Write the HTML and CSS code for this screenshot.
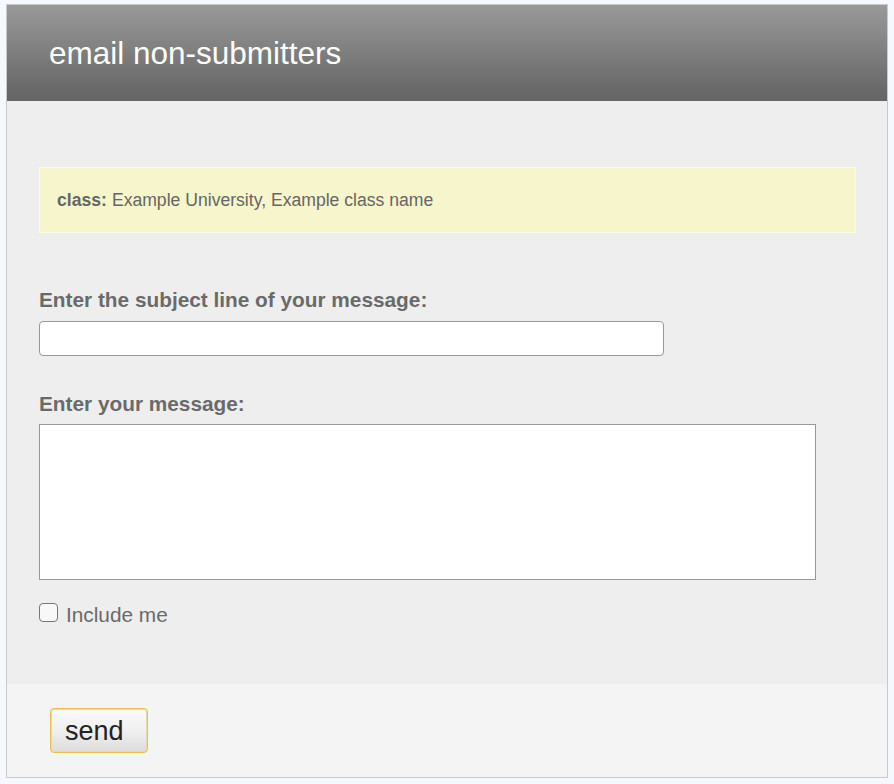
FILE: index.html
```html
<!DOCTYPE html>
<html>
<head>
<meta charset="utf-8">
<title>email non-submitters</title>
<link rel="stylesheet" href="styles.css">
</head>
<body>
<div class="panel">
  <div class="panel-header">
    <h1 class="title">email non-submitters</h1>
  </div>
  <div class="panel-body">
    <div class="notice"><b>class:</b> Example University, Example class name</div>
    <label class="field-label" for="subject">Enter the subject line of your message:</label>
    <input class="subject" id="subject" type="text">
    <label class="field-label second" for="message">Enter your message:</label>
    <textarea class="message" id="message"></textarea>
    <label class="include"><input type="checkbox" class="check"><span>Include me</span></label>
  </div>
  <div class="panel-footer">
    <button class="send" type="button">send</button>
  </div>
</div>
</body>
</html>
```
FILE: styles.css
```css
* { box-sizing: border-box; }
html, body { background: #f5f9fd; }
body {
  margin: 4px 6px;
  font-family: "Liberation Sans", Arial, sans-serif;
  color: #666;
}
.panel {
  width: 882px;
  border: 1px solid #c9c9c9;
  background: #eee;
}
.panel-header {
  height: 96px;
  display: flex;
  align-items: center;
  padding-left: 42px;
  background: linear-gradient(#999, #686868 90%, #666);
}
.title {
  margin: 0;
  font-weight: normal;
  font-size: 31.5px;
  color: #fff;
  line-height: 34px;
}
.panel-body {
  padding: 66px 31px 59px 32px;
  display: flex;
  flex-direction: column;
  align-items: flex-start;
}
.notice {
  width: 100%;
  height: 66px;
  display: flex;
  align-items: center;
  padding-left: 17px;
  background: #f7f5cb;
  border: 1px solid #fbfae4;
  font-size: 17.6px;
  color: #666;
}
.notice b { margin-right: 5px; }
.field-label {
  display: block;
  font-weight: bold;
  font-size: 20.8px;
  line-height: 22px;
  margin-top: 56px;
  margin-bottom: 10px;
  color: #6a6a6a;
}
.field-label.second { margin-top: 37px; margin-bottom: 9px; }
.subject {
  width: 625px;
  height: 35px;
  border: 1px solid #999;
  border-radius: 4px;
  background: #fff;
  margin: 0;
}
.message {
  width: 777px;
  height: 156px;
  border: 1px solid #999;
  border-radius: 0;
  background: #fff;
  margin: 0;
  resize: none;
  display: block;
}
.include {
  display: flex;
  align-items: center;
  margin-top: 23px;
  font-size: 20.8px;
  color: #6a6a6a;
  line-height: 22px;
  height: 22px;
  padding-top: 2px;
}
.check {
  appearance: none;
  -webkit-appearance: none;
  width: 19px;
  height: 19px;
  margin: 0 8px 0 0;
  border: 1px solid #777;
  border-radius: 4px;
  background: #f8f8f8;
  position: relative;
  top: -3px;
}
.panel-footer {
  height: 93px;
  background: #f4f4f4;
  padding: 24px 0 0 43px;
}
.send {
  width: 98px;
  height: 45px;
  border: 1px solid #ecc04a;
  border-radius: 4px;
  background: linear-gradient(#fafafa, #f0f0f0 50%, #dcdcdc);
  box-shadow: inset 0 0 0 1px #e7d9a5;
  font-family: "Liberation Sans", Arial, sans-serif;
  font-size: 27px;
  color: #222;
  padding: 2px 0 0 14px;
  text-align: left;
}
```
